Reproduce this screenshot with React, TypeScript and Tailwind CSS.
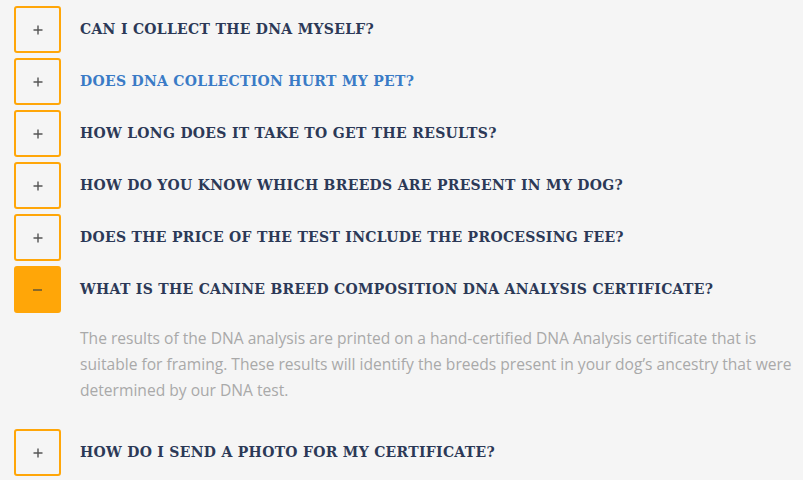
import React, { useState } from 'react';

const faqs = [
  { q: 'Can I collect the DNA myself?' },
  { q: 'Does DNA collection hurt my pet?', highlight: true },
  { q: 'How long does it take to get the results?' },
  { q: 'How do you know which breeds are present in my dog?' },
  { q: 'Does the price of the test include the processing fee?' },
  {
    q: 'What is the Canine Breed Composition DNA Analysis Certificate?',
    a: 'The results of the DNA analysis are printed on a hand-certified DNA Analysis certificate that is suitable for framing. These results will identify the breeds present in your dog\u2019s ancestry that were determined by our DNA test.',
  },
  { q: 'How do I send a photo for my certificate?' },
];

interface FaqRowProps {
  question: string;
  answer?: string;
  open: boolean;
  highlight?: boolean;
  onToggle: () => void;
}

const FaqRow: React.FC<FaqRowProps> = ({ question, answer, open, highlight, onToggle }) => {
  return (
    <div>
      <button onClick={onToggle} className="flex items-center gap-[19px] text-left">
        <span
          className={`flex h-[47px] w-[47px] shrink-0 items-center justify-center rounded-[3px] border-2 border-[#ffa608] ${
            open ? 'bg-[#ffa608]' : ''
          }`}
        >
          {open ? (
            <span className="block h-[2px] w-[9px] bg-[#8a6a2a]" />
          ) : (
            <svg width="10" height="10" viewBox="0 0 10 10">
              <path d="M5 0.5v9M0.5 5h9" stroke="#555" strokeWidth="1.4" />
            </svg>
          )}
        </span>
        <span
          className={`font-['DejaVu_Serif',serif] text-[14px] font-extrabold uppercase tracking-[0.3px] ${
            highlight ? 'text-[#3a7bc6]' : 'text-[#2c3957]'
          }`}
        >
          {question}
        </span>
      </button>
      {open && answer && (
        <p className="pb-[21px] pl-[66px] pr-[4px] pt-[12px] font-['Open_Sans',sans-serif] text-[15.6px] leading-[26px] text-[#a9a9a9]">
          {answer}
        </p>
      )}
    </div>
  );
};

export default function App() {
  const [openIndex, setOpenIndex] = useState(5);

  return (
    <div className="min-h-[480px] w-[803px] bg-[#f5f5f5] pl-[14px] pt-[6px]">
      <div className="flex flex-col gap-[5px]">
        {faqs.map((f, i) => (
          <FaqRow
            key={i}
            question={f.q}
            answer={f.a}
            highlight={f.highlight}
            open={openIndex === i}
            onToggle={() => setOpenIndex(openIndex === i ? -1 : i)}
          />
        ))}
      </div>
    </div>
  );
}
